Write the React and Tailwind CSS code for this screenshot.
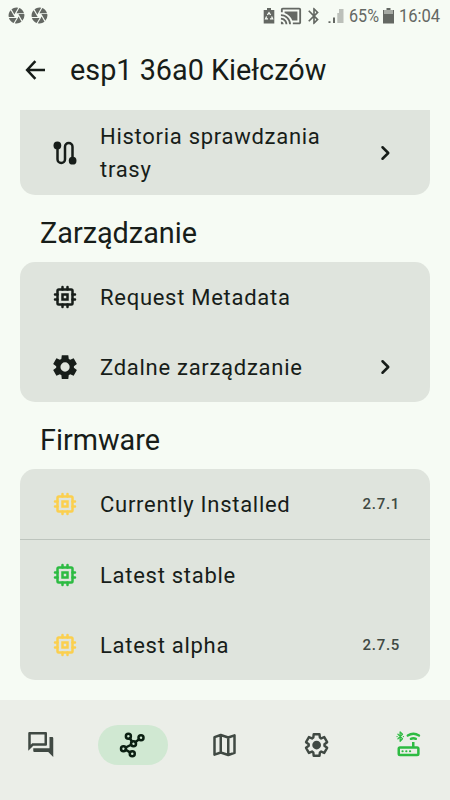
import { MdCamera, MdCastConnected, MdBluetooth } from "react-icons/md";

const GEAR =
  "M9.25 22l-.4-3.2q-.325-.125-.612-.3t-.563-.375L4.7 19.375l-2.75-4.75 2.575-1.95Q4.5 12.5 4.5 12.338v-.675q0-.163.025-.338L1.95 9.375l2.75-4.75 2.975 1.25q.275-.2.575-.375t.6-.3l.4-3.2h5.5l.4 3.2q.325.125.613.3t.562.375l2.975-1.25 2.75 4.75-2.575 1.95q.025.175.025.338v.675q0 .163-.05.338l2.575 1.95-2.75 4.75-2.95-1.25q-.275.2-.575.375t-.6.3l-.4 3.2z";

function Icon({ children, className = "" }) {
  return (
    <svg
      viewBox="0 0 24 24"
      className={`size-[30px] shrink-0 ${className}`}
      fill="none"
      stroke="currentColor"
      strokeWidth="2"
      strokeLinecap="round"
      strokeLinejoin="round"
    >
      {children}
    </svg>
  );
}

function Chip({ className }) {
  return (
    <Icon className={className}>
      <rect x="6" y="6" width="12" height="12" rx="1" />
      <rect x="10" y="10" width="4" height="4" strokeLinejoin="miter" />
      <path d="M10 4v2M14 4v2M10 18v2M14 18v2M4 10h2M4 14h2M18 10h2M18 14h2" />
    </Icon>
  );
}

function Route() {
  return (
    <Icon>
      <path d="M6 6v11a3 3 0 0 0 6 0V7a3 3 0 0 1 6 0v11" />
      <circle cx="5.9" cy="5.9" r="3.1" fill="currentColor" stroke="none" />
      <circle cx="18.1" cy="18.1" r="3.1" fill="currentColor" stroke="none" />
    </Icon>
  );
}

function GearFilled() {
  return (
    <Icon>
      <path
        stroke="none"
        fill="currentColor"
        fillRule="evenodd"
        transform="translate(.7 .6) scale(.945 .95)"
        d={GEAR + "M12 15.9a3.9 3.9 0 1 0 0-7.8 3.9 3.9 0 0 0 0 7.8z"}
      />
    </Icon>
  );
}

function Chevron() {
  return (
    <Icon>
      <path d="M10 7.4 14.6 12l-4.6 4.6" />
    </Icon>
  );
}

function Row({ icon, label, version, arrow }) {
  return (
    <div className="flex h-[70px] items-center px-[30px]">
      {icon}
      <span className="ml-5 flex-1 text-[22px] leading-[33px] tracking-[0.72px]">{label}</span>
      {version && (
        <span className="text-[15px] font-medium tracking-[0.7px] text-[#404943]">{version}</span>
      )}
      {arrow && <Chevron />}
    </div>
  );
}

function Heading({ children }) {
  return (
    <h2 className="flex h-[67px] items-center pt-[9px] pl-5 text-[28.8px] leading-[38px]">
      {children}
    </h2>
  );
}

function StatusBar() {
  return (
    <div className="flex h-[31px] items-center text-[#646863]">
      <MdCamera className="ml-[7px] size-[19px] shrink-0" />
      <MdCamera className="ml-[4px] size-[19px] shrink-0" />
      <svg viewBox="0 0 12 16" className="ml-[214px] h-4 w-3 shrink-0" fill="currentColor">
        <path d="M4 0h4v2h3.3v13.5H.7V2H4z" />
        <path
          d="M4.4 7 6 4.7 7.6 7M8.6 8.6l1 2.2H7M5 10.8H2.6l1-2.2"
          fill="none"
          stroke="#f6fbf4"
          strokeWidth="1.3"
        />
      </svg>
      <MdCastConnected className="ml-[5px] size-[22px] shrink-0" />
      <MdBluetooth className="ml-[2px] size-[20px] shrink-0" />
      <svg viewBox="0 0 16 16" className="ml-[4px] size-4 shrink-0" fill="currentColor">
        <path d="M.5 13.2h2V15h-2zM5 9.5h2V15H5z" />
        <path d="M9.3 5h1.9v10H9.3zM11 1h4.5v14H11z" fill="#bcc0ba" />
      </svg>
      <span className="ml-[5px] w-[31px] shrink-0 pt-[2px]">
        <span className="inline-block origin-left scale-x-[0.85] text-[19px] leading-6 whitespace-nowrap">
          65%
        </span>
      </span>
      <svg viewBox="0 0 11 16" className="ml-[3px] h-4 w-[11px] shrink-0" fill="currentColor">
        <path d="M0 2h11v4H0z" fill="#a6aaa4" />
        <path d="M3.5 0h4v2h-4zM0 2h1v4H0zM10 2h1v4h-1zM0 6h11v9.5H0z" />
      </svg>
      <span className="ml-[5px] w-[42px] shrink-0 pt-[2px]">
        <span className="inline-block origin-left scale-x-[0.87] text-[19px] leading-6 whitespace-nowrap">
          16:04
        </span>
      </span>
    </div>
  );
}

function NavItem({ active, children, className = "text-[#404943]" }) {
  return (
    <div className={`flex h-10 w-[82px] items-center justify-center ${className}`}>
      <div
        className={`flex h-10 w-[70px] items-center justify-center rounded-full ${active ? "bg-[#d0e8d2]" : ""}`}
      >
        {children}
      </div>
    </div>
  );
}

function BottomNav() {
  return (
    <nav className="flex h-[100px] gap-[10px] bg-[#ebeee8] pt-[25px]">
      <NavItem>
        <Icon>
          <path
            stroke="none"
            fill="currentColor"
            transform="translate(-.2 -.4)"
            d="M15 4v7H5.17L4 12.17V4h11m1-2H3c-.55 0-1 .45-1 1v14l4-4h10c.55 0 1-.45 1-1V3c0-.55-.45-1-1-1zm5 4h-2v9H6v2c0 .55.45 1 1 1h11l4 4V7c0-.55-.45-1-1-1z"
          />
        </Icon>
      </NavItem>
      <NavItem active className="text-[#0b1f12]">
        <Icon>
          <g transform="translate(-.2 0)">
            <path d="M9.7 6.6l1.6 2.6M17.1 7.4l-3 2.3M10.7 11.8l-4.4 2.2M6.3 15.8l3.6 2.1" />
            <circle cx="8.5" cy="4.9" r="2" />
            <circle cx="18.6" cy="6.1" r="2" />
            <circle cx="12.6" cy="11" r="2" />
            <circle cx="4.6" cy="15" r="2" />
            <circle cx="11.6" cy="19" r="2" />
          </g>
        </Icon>
      </NavItem>
      <NavItem>
        <Icon>
          <path
            transform="translate(-.4 0)"
            d="M4 5.7 9 4l6 2 5-1.7v14L15 20l-6-2-5 1.7zM9 4v14M15 6v14"
          />
        </Icon>
      </NavItem>
      <NavItem>
        <Icon>
          <g transform="translate(-.3 0)">
            <path d={GEAR} transform="translate(1.9 1.7) scale(.84 .86)" strokeWidth="2.3" />
            <circle cx="12" cy="12" r="3.5" fill="currentColor" stroke="none" />
          </g>
        </Icon>
      </NavItem>
      <NavItem className="text-[#2dbb42]">
        <Icon>
          <g transform="translate(-.3 0)">
            <rect x="4.1" y="14" width="15.7" height="6" rx="1" />
            <path d="M15.7 9.6v4" strokeLinecap="butt" />
            <path d="M11.3 4.4q4.5-2.9 9 0M13.8 7.1q2-1.1 4 0" strokeWidth="1.9" />
            <path d="M3.4 3.3l3.7 3.7-1.9 2V1.5l1.9 1.9-3.7 3.7" strokeWidth="1" />
            <path d="M2.7 5.2h.1M7.8 5.2h.1" strokeWidth="1" />
            <path d="M7.1 17h.1M10.1 17h.1M13.1 17h.1" strokeWidth="1.7" />
          </g>
        </Icon>
      </NavItem>
    </nav>
  );
}

export default function App() {
  return (
    <div
      className="flex h-[800px] w-[450px] flex-col overflow-hidden bg-[#f6fbf4] text-[#171d19]"
      style={{ fontFamily: 'Roboto, "Liberation Sans", sans-serif' }}
    >
      <StatusBar />
      <header className="flex h-[79px] items-center pb-[2px] pl-5">
        <Icon>
          <path d="M20 12H6M12.3 4.9 5.7 12l6.6 7.1" strokeLinecap="butt" strokeLinejoin="miter" />
        </Icon>
        <h1 className="ml-5 text-[28.8px] leading-[38px]">esp1 36a0 Kiełczów</h1>
      </header>
      <main className="h-[590px] px-5">
        <section className="flex h-[85px] items-center rounded-b-[15px] bg-[#dfe4dd] px-[30px]">
          <Route />
          <span className="ml-5 flex-1 text-[22px] leading-[33px] tracking-[0.72px]">
            Historia sprawdzania
            <br />
            trasy
          </span>
          <Chevron />
        </section>
        <Heading>Zarządzanie</Heading>
        <section className="rounded-[15px] bg-[#dfe4dd]">
          <Row icon={<Chip />} label="Request Metadata" />
          <Row icon={<GearFilled />} label="Zdalne zarządzanie" arrow />
        </section>
        <Heading>Firmware</Heading>
        <section className="rounded-[15px] bg-[#dfe4dd]">
          <Row icon={<Chip className="text-[#fbcf4e]" />} label="Currently Installed" version="2.7.1" />
          <div className="h-px bg-[#bdc4bd]" />
          <Row icon={<Chip className="text-[#2dbb42]" />} label="Latest stable" />
          <Row icon={<Chip className="text-[#fbcf4e]" />} label="Latest alpha" version="2.7.5" />
        </section>
      </main>
      <BottomNav />
    </div>
  );
}
